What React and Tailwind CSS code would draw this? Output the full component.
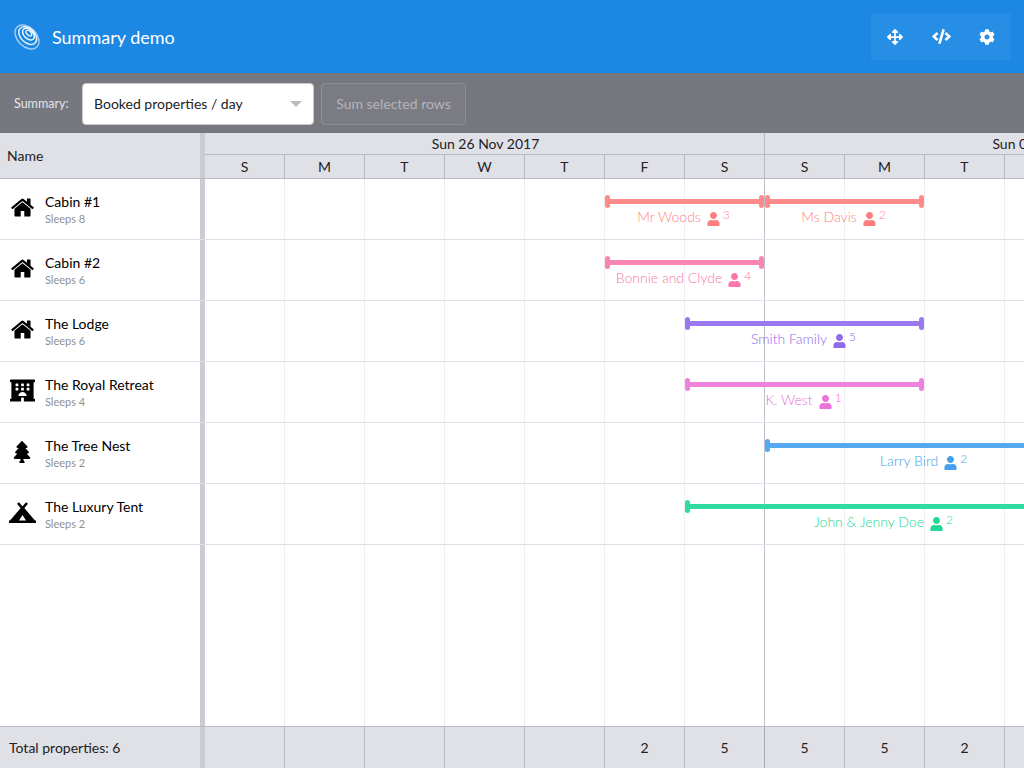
import React from "react";
import { FaArrowsAlt, FaCode, FaCog, FaHotel, FaTree, FaUser } from "react-icons/fa";

const days = ["S", "M", "T", "W", "T", "F", "S", "S", "M", "T", "W"];
const totals = ["", "", "", "", "", "2", "5", "5", "5", "2", ""];

function HomeIcon() {
  return (
    <svg viewBox="0 0 1792 1792" fill="currentColor" className="w-[25px] h-[25px]">
      <path d="M1472 992v480q0 26-19 45t-45 19h-384v-384h-256v384h-384q-26 0-45-19t-19-45v-480q0-1 .5-3t.5-3l575-474 575 474q1 2 1 6zm223-69l-62 74q-8 9-21 11h-3q-13 0-21-7l-692-577-692 577q-12 8-24 7-13-2-21-11l-62-74q-8-10-7-23.500t11-21.500l719-599q32-26 76-26t76 26l244 204v-195q0-14 9-23t23-9h192q14 0 23 9t9 23v408l219 182q10 8 11 21.500t-7 23.500z" />
    </svg>
  );
}

function TentIcon() {
  return (
    <svg viewBox="0 0 27 21" fill="currentColor" className="w-[27px] h-[21px]">
      <path fillRule="evenodd" d="M13.500 4 26 18.500h1V21H0v-2.500h1L13.500 4ZM13.500 13 10 18.500h7L13.500 13Z" />
      <path d="M9 1 14.500 7.500M18 1 12.500 7.500" stroke="currentColor" strokeWidth="2.600" fill="none" />
    </svg>
  );
}

const rows = [
  {
    name: "Cabin #1",
    sleeps: "Sleeps 8",
    icon: <HomeIcon />,
    events: [
      { label: "Mr Woods", count: 3, pos: "left-[400px] w-[159px]", bg: "bg-[#ff8a8a]", text: "text-[#ff7f7f]" },
      { label: "Ms Davis", count: 2, pos: "left-[560px] w-[159px]", bg: "bg-[#ff8a8a]", text: "text-[#ff7f7f]" },
    ],
  },
  {
    name: "Cabin #2",
    sleeps: "Sleeps 6",
    icon: <HomeIcon />,
    events: [{ label: "Bonnie and Clyde", count: 4, pos: "left-[400px] w-[159px]", bg: "bg-[#fa85b3]", text: "text-[#f977aa]" }],
  },
  {
    name: "The Lodge",
    sleeps: "Sleeps 6",
    icon: <HomeIcon />,
    events: [{ label: "Smith Family", count: 5, pos: "left-[480px] w-[239px]", bg: "bg-[#9a78ee]", text: "text-[#8f6aee]" }],
  },
  {
    name: "The Royal Retreat",
    sleeps: "Sleeps 4",
    icon: <FaHotel className="w-[25px] h-[25px]" />,
    events: [{ label: "K. West", count: 1, pos: "left-[480px] w-[239px]", bg: "bg-[#ee82dd]", text: "text-[#ea72d8]" }],
  },
  {
    name: "The Tree Nest",
    sleeps: "Sleeps 2",
    icon: <FaTree className="w-[22px] h-[22px]" />,
    events: [{ label: "Larry Bird", count: 2, pos: "left-[560px] w-[319px]", bg: "bg-[#55a9f0]", text: "text-[#449fee]" }],
  },
  {
    name: "The Luxury Tent",
    sleeps: "Sleeps 2",
    icon: <TentIcon />,
    events: [{ label: "John & Jenny Doe", count: 2, pos: "left-[480px] w-[399px]", bg: "bg-[#2fdc9f]", text: "text-[#1ed894]" }],
  },
];

function Logo() {
  return (
    <svg width="28" height="28" viewBox="0 0 28 28" fill="none" stroke="white" className="shrink-0">
      <g transform="rotate(45 14 14)">
        <ellipse cx="14" cy="14" rx="14" ry="9.500" strokeWidth="1.400" strokeOpacity="0.6" />
        <ellipse cx="13.500" cy="12.500" rx="10.500" ry="7" strokeWidth="1.500" strokeOpacity="0.85" />
        <ellipse cx="13" cy="11" rx="7" ry="4.500" strokeWidth="1.400" />
        <ellipse cx="12.500" cy="10" rx="3.500" ry="2" strokeWidth="1.200" />
      </g>
    </svg>
  );
}

function Splitter() {
  return <div className="w-[5px] shrink-0 bg-[#cbcbd3]" />;
}

function Event({ event }) {
  return (
    <div className={`absolute top-4 flex flex-col items-center ${event.pos}`}>
      <div className="flex items-center w-full">
        <div className={`w-[5px] h-[13px] rounded-sm ${event.bg}`} />
        <div className={`flex-1 h-[5px] ${event.bg}`} />
        <div className={`w-[5px] h-[13px] rounded-sm ${event.bg}`} />
      </div>
      <div className={`flex items-center whitespace-nowrap text-sm font-light h-[22px] -mt-[2px] pr-[2px] ${event.text}`}>
        <span>{event.label}</span>
        <FaUser className="w-[13px] h-[14px] ml-[6px] mt-1" />
        <span className="text-xs ml-[3px] -mt-1">{event.count}</span>
      </div>
    </div>
  );
}

function GridCells() {
  return days.map((d, i) => (
    <div key={i} className={`w-20 shrink-0 border-r ${i === 6 ? "border-[#c0bfcc]" : "border-[#eeeef2]"}`} />
  ));
}

export default function App() {
  return (
    <div className="w-[1024px] h-[768px] flex flex-col overflow-hidden bg-white text-[#222] font-['Lato',sans-serif]">
      {/* Header */}
      <header className="h-[73px] shrink-0 flex items-center justify-between pl-[13px] pr-[13px] bg-[#1c88e4]">
        <div className="flex items-center gap-[11px]">
          <Logo />
          <h1 className="text-lg text-white">Summary demo</h1>
        </div>
        <div className="flex h-[46px] px-px bg-white/5">
          <button className="w-[46px] flex items-center justify-center text-white"><FaArrowsAlt className="w-4 h-4" /></button>
          <button className="w-[46px] flex items-center justify-center text-white"><FaCode className="w-[19px] h-[19px]" /></button>
          <button className="w-[46px] flex items-center justify-center text-white"><FaCog className="w-4 h-4" /></button>
        </div>
      </header>

      {/* Toolbar */}
      <div className="h-[60px] shrink-0 flex items-center pl-[14px] pt-[2px] bg-[#77777f]">
        <span className="text-[12.5px] text-[#e4e4e8] w-[68px]">Summary:</span>
        <div className="w-[232px] h-[42px] flex items-center justify-between pl-[11px] pr-[11px] bg-white border border-[#c8c8ce] rounded-sm">
          <span className="text-sm text-[#222]">Booked properties / day</span>
          <div className="w-0 h-0 border-x-[6px] border-x-transparent border-t-[6px] border-t-[#bbbbbb]" />
        </div>
        <button className="ml-[7px] w-[145px] h-[42px] text-sm text-[#b5b5ba] bg-white/[0.03] border border-[#8f8f97] rounded-sm">Sum selected rows</button>
      </div>

      {/* Timeline header */}
      <div className="h-[46px] shrink-0 flex bg-[#e0e1e7] border-b border-[#b9b9c4]">
        <div className="w-[200px] shrink-0 flex items-center pl-[7px] text-sm">Name</div>
        <Splitter />
        <div className="flex-1 min-w-0 overflow-hidden">
          <div className="flex h-[22px] border-b border-[#b9b9c4] w-[1120px]">
            <div className="w-[560px] shrink-0 text-center text-sm leading-[21px] pl-[2px] border-r border-[#b9b9c4]">Sun 26 Nov 2017</div>
            <div className="w-[560px] shrink-0 text-center text-sm leading-[21px] pl-[2px]">Sun 03 Dec 2017</div>
          </div>
          <div className="flex h-[23px]">
            {days.map((d, i) => (
              <div key={i} className="w-20 shrink-0 text-center text-sm leading-[23px] border-r border-[#b9b9c4]">{d}</div>
            ))}
          </div>
        </div>
      </div>

      {/* Rows */}
      <div className="flex-1 min-h-0 flex flex-col">
        {rows.map((row) => (
          <div key={row.name} className="h-[61px] shrink-0 flex border-b border-[#e0e0e6]">
            <div className="w-[200px] shrink-0 flex items-center">
              <div className="w-[45px] shrink-0 flex justify-center pr-[1px] -mt-[3px] text-black">{row.icon}</div>
              <div className="mt-[2px]">
                <div className="text-sm leading-[18px] text-black">{row.name}</div>
                <div className="text-[11px] leading-[16px] text-[#909090]">{row.sleeps}</div>
              </div>
            </div>
            <Splitter />
            <div className="relative flex-1 min-w-0 flex overflow-hidden">
              <GridCells />
              {row.events.map((event) => (
                <Event key={event.label} event={event} />
              ))}
            </div>
          </div>
        ))}
        <div className="flex-1 flex">
          <div className="w-[200px] shrink-0" />
          <Splitter />
          <div className="flex-1 min-w-0 flex overflow-hidden">
            <GridCells />
          </div>
        </div>
      </div>

      {/* Footer */}
      <div className="h-[42px] shrink-0 flex bg-[#e0e1e7] border-t border-[#b9b9c4]">
        <div className="w-[200px] shrink-0 flex items-center pl-[9px] text-sm">Total properties: 6</div>
        <Splitter />
        <div className="flex-1 min-w-0 flex overflow-hidden">
          {totals.map((t, i) => (
            <div key={i} className={`w-20 shrink-0 flex items-center justify-center text-sm border-r ${i === 6 ? "border-[#a9a9b6]" : "border-[#b9b9c4]"}`}>{t}</div>
          ))}
        </div>
      </div>
    </div>
  );
}
